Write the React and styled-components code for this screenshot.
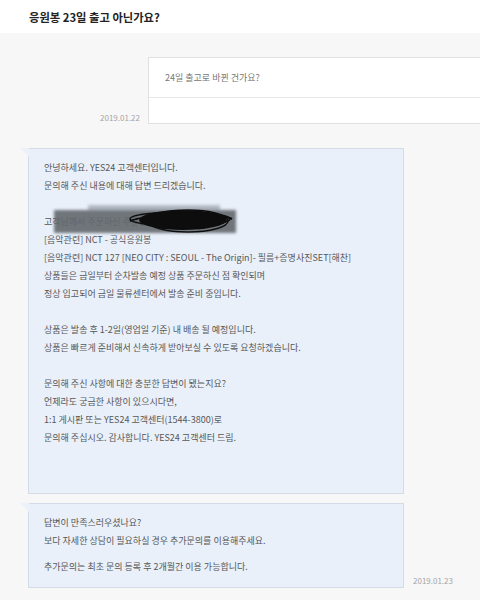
import React from "react";
import styled, { createGlobalStyle } from "styled-components";

const Global = createGlobalStyle`
  html, body { margin: 0; padding: 0; background: #f7f7f7; }
  body { font-family: "Noto Sans CJK KR", "Noto Sans", sans-serif; overflow: hidden; }
  * { box-sizing: border-box; }
`;

const Page = styled.div`
  width: 480px;
  height: 600px;
  overflow: hidden;
  background: #f7f7f7;
`;

const Header = styled.header`
  height: 33px;
  background: #ffffff;
  display: flex;
  align-items: center;
  padding-left: 29px;
`;

const Title = styled.h1`
  margin: 0;
  font-size: 11.3px;
  font-weight: 700;
  color: #222;
`;

const Thread = styled.div`
  display: flex;
  flex-direction: column;
  padding-top: 24px;
`;

const Row = styled.div`
  display: flex;
  align-items: flex-end;
  gap: ${(p) => p.$gap || 8}px;
  margin-top: ${(p) => p.$top || 0}px;
  padding-left: ${(p) => p.$left || 0}px;
`;

const DateText = styled.span`
  font-size: 8px;
  color: #a5a5a5;
  line-height: 10px;
  margin-bottom: ${(p) => p.$bottom || 0}px;
  white-space: nowrap;
`;

const DateSlot = styled.div`
  width: 140px;
  display: flex;
  justify-content: flex-end;
`;

const QuestionBox = styled.div`
  flex: 1;
  margin-right: -20px;
  background: #fff;
  border: 1px solid #e1e1e1;
`;

const QuestionBody = styled.div`
  height: 40px;
  display: flex;
  align-items: center;
  padding-left: 16px;
  font-size: 9px;
  color: #777;
  border-bottom: 1px solid #e8e8e8;
`;

const QuestionFoot = styled.div`
  height: 25px;
`;

const Stack = styled.div`
  display: flex;
  flex-direction: column;
  gap: 9px;
`;

const Bubble = styled.div`
  position: relative;
  width: 376px;
  background: #e9f0fa;
  border: 1px solid #d3dbe6;
  padding: ${(p) => p.$pad};
  font-size: 9px;
  line-height: 18px;
  color: #575757;

  &::before {
    content: "";
    position: absolute;
    left: -9px;
    top: -1px;
    width: 0;
    height: 0;
    border-top: 9px solid #edf2f9;
    border-left: 9px solid transparent;
  }
`;

const Para = styled.p`
  margin: 0 0 ${(p) => p.$gap ?? 18}px;
  &:last-child { margin-bottom: 0; }
`;

const Line = styled.span`
  display: block;
  white-space: nowrap;
  position: relative;
`;

const Scribble = styled.svg`
  position: absolute;
  left: 8px;
  top: -8px;
  overflow: visible;
`;

function Redaction() {
  return (
    <Scribble width="186" height="30" viewBox="0 0 186 30">
      <defs>
        <filter id="blur" x="-20%" y="-50%" width="140%" height="200%">
          <feGaussianBlur stdDeviation="1.6" />
        </filter>
        <filter id="blur2" x="-20%" y="-50%" width="140%" height="200%">
          <feGaussianBlur stdDeviation="0.6" />
        </filter>
      </defs>
      <rect x="36" y="0" width="132" height="6" fill="#8e949c" opacity="0.6" filter="url(#blur)" />
      <rect x="2" y="5" width="182" height="23" fill="#63676d" opacity="0.9" filter="url(#blur)" />
      <g filter="url(#blur2)">
        <ellipse cx="131" cy="15" rx="44" ry="10" fill="#111" />
        <ellipse cx="128" cy="14" rx="50" ry="7" fill="none" stroke="#111" strokeWidth="1.5" />
        <ellipse cx="136" cy="16" rx="40" ry="11" fill="none" stroke="#111" strokeWidth="1.5" />
        <path d="M78 16 C 95 9, 168 8, 180 14" stroke="#111" strokeWidth="2" fill="none" />
      </g>
    </Scribble>
  );
}

export default function App() {
  return (
    <Page>
      <Global />
      <Header>
        <Title>응원봉 23일 출고 아닌가요?</Title>
      </Header>
      <Thread>
        <Row>
          <DateSlot>
            <DateText $bottom={1}>2019.01.22</DateText>
          </DateSlot>
          <QuestionBox>
            <QuestionBody>24일 출고로 바뀐 건가요?</QuestionBody>
            <QuestionFoot />
          </QuestionBox>
        </Row>
        <Row $top={24} $left={28} $gap={9}>
          <Stack>
            <Bubble $pad="10px 15px 46px">
              <Para>
                <Line>안녕하세요. YES24 고객센터입니다.</Line>
                <Line>문의해 주신 내용에 대해 답변 드리겠습니다.</Line>
              </Para>
              <Para>
                <Line>
                  고객님께서 주문하신 주문번호
                  <Redaction />
                </Line>
                <Line>[음악관련] NCT - 공식응원봉</Line>
                <Line>[음악관련] NCT 127 [NEO CITY : SEOUL - The Origin]- 필름+증명사진SET[해찬]</Line>
                <Line>상품들은 금일부터 순차발송 예정 상품 주문하신 점 확인되며</Line>
                <Line>정상 입고되어 금일 물류센터에서 발송 준비 중입니다.</Line>
              </Para>
              <Para>
                <Line>상품은 발송 후 1-2일(영업일 기준) 내 배송 될 예정입니다.</Line>
                <Line>상품은 빠르게 준비해서 신속하게 받아보실 수 있도록 요청하겠습니다.</Line>
              </Para>
              <Para>
                <Line>문의해 주신 사항에 대한 충분한 답변이 됐는지요?</Line>
                <Line>언제라도 궁금한 사항이 있으시다면,</Line>
                <Line>1:1 게시판 또는 YES24 고객센터(1544-3800)로</Line>
                <Line>문의해 주십시오. 감사합니다. YES24 고객센터 드림.</Line>
              </Para>
            </Bubble>
            <Bubble $pad="10px 15px 11px">
              <Para $gap={8}>
                <Line>답변이 만족스러우셨나요?</Line>
                <Line>보다 자세한 상담이 필요하실 경우 추가문의를 이용해주세요.</Line>
              </Para>
              <Para>
                <Line>추가문의는 최초 문의 등록 후 2개월간 이용 가능합니다.</Line>
              </Para>
            </Bubble>
          </Stack>
          <DateText $bottom={2}>2019.01.23</DateText>
        </Row>
      </Thread>
    </Page>
  );
}
